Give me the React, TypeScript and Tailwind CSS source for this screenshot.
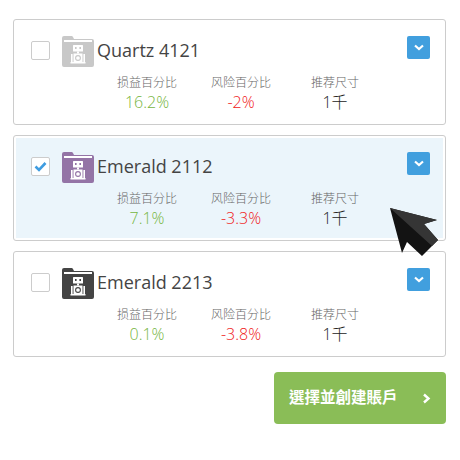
import React from "react";

function FolderRobot({ color }: { color: string }) {
  return (
    <svg width="32" height="31" viewBox="0 0 32 31" className="shrink-0">
      <path d="M0 2a2 2 0 0 1 2-2h7a2 2 0 0 1 2 1l1 2h18a2 2 0 0 1 2 2v24a2 2 0 0 1-2 2H2a2 2 0 0 1-2-2z" fill={color} />
      <rect x="2" y="4" width="28" height="2" fill="#fff" />
      <g fill="#fff">
        <rect x="11" y="9" width="10" height="6.5" rx="0.5" />
        <rect x="15" y="15.5" width="2" height="2" />
        <rect x="11.5" y="17.5" width="9" height="8.5" />
        <rect x="9" y="18" width="1.6" height="8" />
        <rect x="21.4" y="18" width="1.6" height="8" />
        <rect x="8.5" y="26" width="15" height="1.5" />
      </g>
      <rect x="13" y="11" width="1.6" height="2" fill={color} />
      <rect x="17.4" y="11" width="1.6" height="2" fill={color} />
      <circle cx="16" cy="22" r="2.4" fill="none" stroke={color} strokeWidth="1.1" />
    </svg>
  );
}

function Stat({ label, value, valueClass }: { label: string; value: string; valueClass: string }) {
  return (
    <div className="flex w-[94px] flex-col items-center">
      <div className="text-[12px] leading-[18px] font-light text-[#666]">{label}</div>
      <div className={`text-[16px] leading-[20px] ${valueClass}`}>{value}</div>
    </div>
  );
}

type Item = { name: string; color: string; gain: string; risk: string; selected?: boolean };

const items: Item[] = [
  { name: "Quartz 4121", color: "#c8c8c8", gain: "16.2%", risk: "-2%" },
  { name: "Emerald 2112", color: "#9474a6", gain: "7.1%", risk: "-3.3%", selected: true },
  { name: "Emerald 2213", color: "#444444", gain: "0.1%", risk: "-3.8%" },
];

function Card({ item }: { item: Item }) {
  return (
    <div className="h-[106px] rounded-[3px] border border-[#cccccc] bg-white p-[2px]">
      <div className={`flex h-full flex-col px-[15px] pt-[14px] ${item.selected ? "bg-[#ebf5fb]" : "bg-white"}`}>
        <div className="flex h-[32px] items-start">
          <div className="mt-[5px] flex h-[19px] w-[19px] items-center justify-center rounded-[2px] border border-[#cccccc] bg-white">
            {item.selected && (
              <svg width="13" height="11" viewBox="0 0 13 11">
                <path d="M1.5 5.5 L5 9 L11.5 2" fill="none" stroke="#3f9ce0" strokeWidth="2.6" />
              </svg>
            )}
          </div>
          <div className="ml-[12px]">
            <FolderRobot color={item.color} />
          </div>
          <div className="ml-[3px] mt-[1px] text-[18px] leading-[26px] text-[#444]">{item.name}</div>
          <div className="ml-auto mr-[-2px] flex h-[23px] w-[23px] items-center justify-center rounded-[2px] bg-[#419fde]">
            <svg width="10" height="7" viewBox="0 0 10 7">
              <path d="M1 1.5 L5 5 L9 1.5" fill="none" stroke="#fff" strokeWidth="2.2" />
            </svg>
          </div>
        </div>
        <div className="mt-[6px] ml-[69px] flex">
          <Stat label="损益百分比" value={item.gain} valueClass="font-light text-[#76b540]" />
          <Stat label="风险百分比" value={item.risk} valueClass="font-light text-[#f02020]" />
          <Stat label="推荐尺寸" value="1千" valueClass="font-light text-[#222]" />
        </div>
      </div>
    </div>
  );
}

export default function App() {
  return (
    <div
      className="relative h-[460px] w-[460px] overflow-hidden bg-white pl-[13px] pr-[14px] pt-[19px]"
      style={{ fontFamily: '"Open Sans", "Noto Sans CJK SC", sans-serif' }}
    >
      <div className="flex flex-col gap-[10px]">
        {items.map((it) => (
          <Card key={it.name} item={it} />
        ))}
      </div>
      <div className="mt-[15px] flex justify-end">
        <button
          className="flex h-[52px] w-[172px] items-center rounded-[4px] bg-[#8abd57] pl-[15px] pr-[15px] text-[15.5px] font-bold text-white"
          style={{ fontFamily: '"Open Sans", "Noto Sans CJK TC", sans-serif' }}
        >
          <span>選擇並創建賬戶</span>
          <svg width="9" height="11" viewBox="0 0 9 11" className="ml-auto">
            <path d="M2 1.5 L6.5 5.5 L2 9.5" fill="none" stroke="#fff" strokeWidth="2.4" />
          </svg>
        </button>
      </div>
      <svg width="60" height="60" viewBox="0 0 60 60" className="absolute left-[385px] top-[200px]">
        <path d="M5 8 L52 20 L39 24 L53 40 L37 56 L22 42 L17 53 Z" fill="#131313" />
        <path d="M5 8 L52 20 L39 24 L53 40 L47 46 Z" fill="#353535" />
      </svg>
    </div>
  );
}
